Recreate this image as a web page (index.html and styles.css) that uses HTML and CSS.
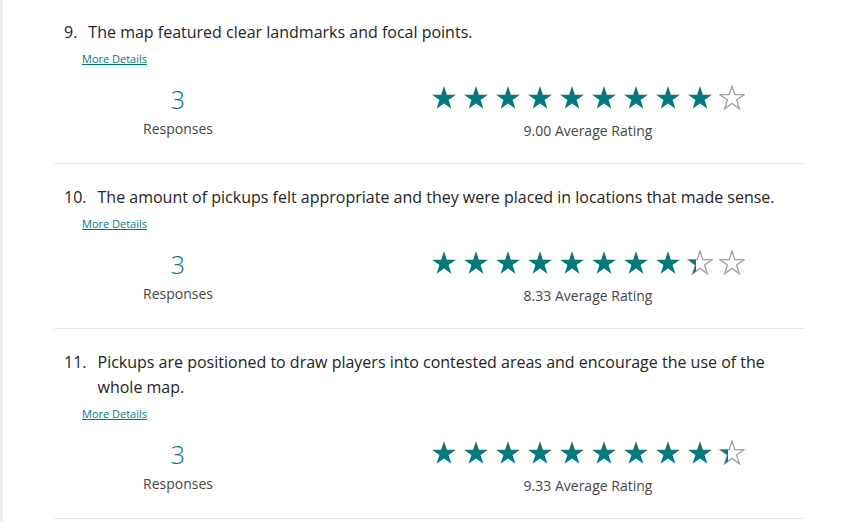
FILE: index.html
```html
<!DOCTYPE html>
<html lang="en">
<head>
<meta charset="utf-8">
<title>Results</title>
<link rel="stylesheet" href="styles.css">
</head>
<body>
<svg class="defs" width="0" height="0" aria-hidden="true">
  <defs>
    <path id="star" d="M12 0 L14.83 8.71 L23.98 8.71 L16.57 14.09 L19.41 22.79 L12 17.41 L4.59 22.79 L7.43 14.09 L0.02 8.71 L9.17 8.71 Z"/>
    <clipPath id="third"><rect x="-1" y="-1" width="9" height="26"/></clipPath>
  </defs>
</svg>
<div class="page">
  <div class="list">
    <section class="q">
      <div class="q-title"><span class="q-num">9.</span><span class="q-text">The map featured clear landmarks and focal points.</span></div>
      <a class="more" href="#">More Details</a>
      <div class="stats">
        <div class="resp"><div class="count">3</div><div class="label">Responses</div></div>
        <div class="rating">
          <div class="stars">
            <svg class="star" viewBox="-1 -1 26 25"><use href="#star" class="full"/></svg>
            <svg class="star" viewBox="-1 -1 26 25"><use href="#star" class="full"/></svg>
            <svg class="star" viewBox="-1 -1 26 25"><use href="#star" class="full"/></svg>
            <svg class="star" viewBox="-1 -1 26 25"><use href="#star" class="full"/></svg>
            <svg class="star" viewBox="-1 -1 26 25"><use href="#star" class="full"/></svg>
            <svg class="star" viewBox="-1 -1 26 25"><use href="#star" class="full"/></svg>
            <svg class="star" viewBox="-1 -1 26 25"><use href="#star" class="full"/></svg>
            <svg class="star" viewBox="-1 -1 26 25"><use href="#star" class="full"/></svg>
            <svg class="star" viewBox="-1 -1 26 25"><use href="#star" class="full"/></svg>
            <svg class="star" viewBox="-1 -1 26 25"><use href="#star" class="empty"/></svg>
          </div>
          <div class="avg">9.00 Average Rating</div>
        </div>
      </div>
    </section>
    <section class="q">
      <div class="q-title"><span class="q-num">10.</span><span class="q-text">The amount of pickups felt appropriate and they were placed in locations that made sense.</span></div>
      <a class="more" href="#">More Details</a>
      <div class="stats">
        <div class="resp"><div class="count">3</div><div class="label">Responses</div></div>
        <div class="rating">
          <div class="stars">
            <svg class="star" viewBox="-1 -1 26 25"><use href="#star" class="full"/></svg>
            <svg class="star" viewBox="-1 -1 26 25"><use href="#star" class="full"/></svg>
            <svg class="star" viewBox="-1 -1 26 25"><use href="#star" class="full"/></svg>
            <svg class="star" viewBox="-1 -1 26 25"><use href="#star" class="full"/></svg>
            <svg class="star" viewBox="-1 -1 26 25"><use href="#star" class="full"/></svg>
            <svg class="star" viewBox="-1 -1 26 25"><use href="#star" class="full"/></svg>
            <svg class="star" viewBox="-1 -1 26 25"><use href="#star" class="full"/></svg>
            <svg class="star" viewBox="-1 -1 26 25"><use href="#star" class="full"/></svg>
            <svg class="star" viewBox="-1 -1 26 25"><use href="#star" class="empty"/><use href="#star" class="full" clip-path="url(#third)"/></svg>
            <svg class="star" viewBox="-1 -1 26 25"><use href="#star" class="empty"/></svg>
          </div>
          <div class="avg">8.33 Average Rating</div>
        </div>
      </div>
    </section>
    <section class="q">
      <div class="q-title"><span class="q-num">11.</span><span class="q-text">Pickups are positioned to draw players into contested areas and encourage the use of the whole map.</span></div>
      <a class="more" href="#">More Details</a>
      <div class="stats">
        <div class="resp"><div class="count">3</div><div class="label">Responses</div></div>
        <div class="rating">
          <div class="stars">
            <svg class="star" viewBox="-1 -1 26 25"><use href="#star" class="full"/></svg>
            <svg class="star" viewBox="-1 -1 26 25"><use href="#star" class="full"/></svg>
            <svg class="star" viewBox="-1 -1 26 25"><use href="#star" class="full"/></svg>
            <svg class="star" viewBox="-1 -1 26 25"><use href="#star" class="full"/></svg>
            <svg class="star" viewBox="-1 -1 26 25"><use href="#star" class="full"/></svg>
            <svg class="star" viewBox="-1 -1 26 25"><use href="#star" class="full"/></svg>
            <svg class="star" viewBox="-1 -1 26 25"><use href="#star" class="full"/></svg>
            <svg class="star" viewBox="-1 -1 26 25"><use href="#star" class="full"/></svg>
            <svg class="star" viewBox="-1 -1 26 25"><use href="#star" class="full"/></svg>
            <svg class="star" viewBox="-1 -1 26 25"><use href="#star" class="empty"/><use href="#star" class="full" clip-path="url(#third)"/></svg>
          </div>
          <div class="avg">9.33 Average Rating</div>
        </div>
      </div>
    </section>
  </div>
</div>
</body>
</html>
```
FILE: styles.css
```css
* { box-sizing: border-box; }
html, body { margin: 0; padding: 0; background: #ffffff; }
body {
  font-family: "Open Sans", "Noto Sans", "DejaVu Sans", sans-serif;
  color: #323130;
  overflow: hidden;
}
.defs { display: block; width: 0; height: 0; overflow: hidden; }
.page {
  border-left: 3px solid #e9eef1;
  min-height: 523px;
  padding-left: 51px;
}
.list { width: 750px; margin-top: -1px; }
.q {
  border-bottom: 1px solid #e8e8e8;
  padding: 21px 0 22px 10px;
}
.q-title {
  display: flex;
  padding-right: 10px;
  font-size: 16px;
  line-height: 25px;
  color: #252423;
}
.q-num { flex: none; margin-right: 11px; }
.q-text { flex: 1; }
.more {
  display: block;
  width: fit-content;
  margin: 6px 0 0 18px;
  font-size: 11px;
  line-height: 16px;
  color: #03787c;
  text-decoration: underline;
}
.stats {
  display: flex;
  margin: 16px 0 0 18px;
}
.resp { width: 192px; flex: none; text-align: center; }
.count {
  font-size: 25px;
  font-weight: 300;
  line-height: 32px;
  color: #03787c;
}
.label {
  margin-top: 4px;
  font-size: 14px;
  line-height: 20px;
  color: #484644;
}
.rating { flex: 1; margin-left: 98px; text-align: center; }
.stars {
  display: flex;
  justify-content: center;
  gap: 6px;
  padding-top: 2px;
  height: 27px;
}
.star { width: 26px; height: 25px; display: block; }
.full { fill: #047a7a; }
.empty { fill: #ffffff; stroke: #a19f9d; stroke-width: 1.3; stroke-linejoin: miter; }
.avg {
  margin-top: 11px;
  font-size: 14px;
  line-height: 20px;
  color: #484644;
}
```
